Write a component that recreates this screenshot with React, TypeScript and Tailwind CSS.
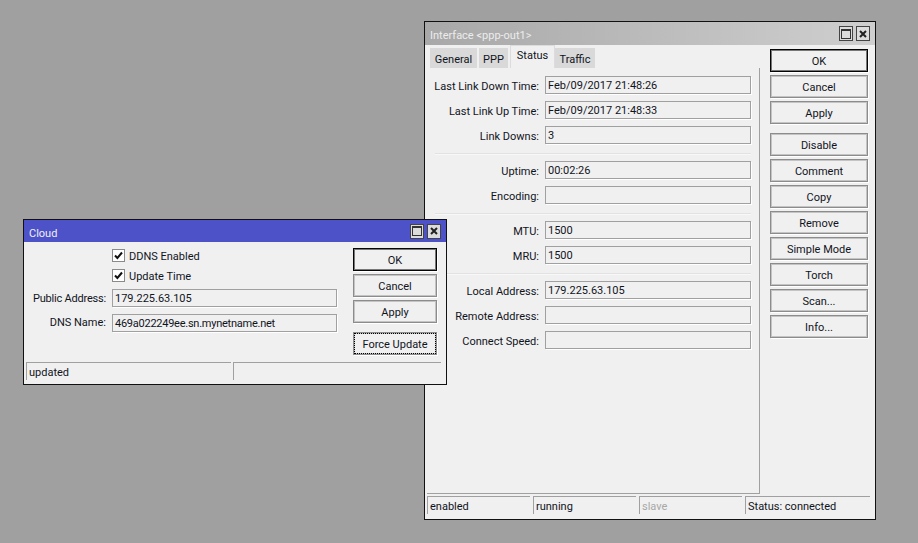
import React from "react";

const font = "font-['Roboto',sans-serif] text-[11px] leading-[14px] text-[#10141c]";

const Btn = ({ label, variant, className = "" }: { label: string; variant?: "default" | "focus"; className?: string }) => (
  <div
    className={`relative h-[23px] w-full flex items-center justify-center pt-[2px] border ${
      variant === "default" ? "border-[#050505] shadow-[inset_0_0_0_1px_#777,1px_1px_0_#fff]" : "border-[#8c8c8c] shadow-[inset_0_0_0_1px_#c4c4c4,1px_1px_0_#fff]"
    } ${className}`}
  >
    {variant === "focus" && <div className="absolute inset-0 border border-dotted border-black" />}
    {label}
  </div>
);

const Field = ({ value, className = "" }: { value?: string; className?: string }) => (
  <div className={`h-[18px] flex items-center pl-[2px] pt-[2px] border border-[#a0a0a0] shadow-[1px_1px_0_#fff] ${className}`}>{value}</div>
);

const Row = ({ label, value }: { label: string; value?: string }) => (
  <div className="flex items-center gap-[6px]">
    <div className="w-[112px] pt-[3px] text-right whitespace-nowrap">{label}:</div>
    <Field value={value} className="w-[206px]" />
  </div>
);

const Sep = () => <div className="ml-[8px] w-[316px] h-[2px] bg-[#e2e2e2] border-b border-[#f8f8f8]" />;

const Check = ({ label }: { label: string }) => (
  <div className="flex items-center gap-[4px] h-[13px] ml-[88px]">
    <div className="w-[13px] h-[13px] bg-white border border-[#8a8a8a] flex items-center justify-center">
      <svg width="9" height="9" viewBox="0 0 9 9">
        <path d="M1 4.5 L3.4 7 L8 1.5" fill="none" stroke="#111" strokeWidth="2" />
      </svg>
    </div>
    <span className="pt-[3px]">{label}</span>
  </div>
);

const TitleButtons = () => (
  <div className="flex gap-[3px]">
    <div className="w-[14px] h-[15px] bg-[#dcdcdc] border border-[#444] flex items-center justify-center">
      <div className="w-[10px] h-[10px] border border-[#333] border-t-2" />
    </div>
    <div className="w-[14px] h-[15px] bg-[#dcdcdc] border border-[#444] flex items-center justify-center">
      <svg width="8" height="8" viewBox="0 0 8 8">
        <path d="M1 1 L7 7 M7 1 L1 7" stroke="#222" strokeWidth="2" />
      </svg>
    </div>
  </div>
);

const Cell = ({ text, className = "" }: { text: string; className?: string }) => (
  <div className={`h-[18px] flex items-center pl-[2px] pt-[2px] border-l border-t border-[#a0a0a0] ${className}`}>{text}</div>
);

const Tab = ({ label, active, className = "" }: { label: string; active?: boolean; className?: string }) => (
  <div
    className={`flex justify-center ${
      active ? "h-[23px] pt-[3px] bg-[#f0f0f0] border-t border-x border-[#dcdcdc]" : "h-[20px] pt-[5px] bg-[#d9d9d9]"
    } ${className}`}
  >
    {label}
  </div>
);

export default function App() {
  return (
    <div className={`relative w-[918px] h-[543px] overflow-hidden bg-[#a0a0a0] ${font}`}>
      {/* interface window */}
      <div className="absolute left-[424px] top-[21px] w-[452px] h-[499px] border border-[#111] bg-[#f0f0f0] flex flex-col">
        <div className="h-[23px] shrink-0 flex items-center justify-between pl-[5px] pr-[5px] bg-gradient-to-r from-[#a8a8a8] to-[#cfcfcf] text-[#ececec]">
          <span className="pt-[5px]">{"Interface <ppp-out1>"}</span>
          <TitleButtons />
        </div>
        <div className="flex flex-1">
          <div className="w-[333px] ml-[2px]">
            <div className="flex items-end h-[23px] pl-[3px]">
              <Tab label="General" className="w-[47px]" />
              <Tab label="PPP" className="w-[29px] ml-[2px]" />
              <Tab label="Status" active className="w-[45px] ml-[2px]" />
              <Tab label="Traffic" className="w-[40px]" />
            </div>
            <div className="h-[426px] border-r border-b border-[#a0a0a0] pt-[8px] flex flex-col">
              <div className="flex flex-col gap-[7px]">
                <Row label="Last Link Down Time" value="Feb/09/2017 21:48:26" />
                <Row label="Last Link Up Time" value="Feb/09/2017 21:48:33" />
                <Row label="Link Downs" value="3" />
              </div>
              <div className="mt-[9px] mb-[6px]"><Sep /></div>
              <div className="flex flex-col gap-[7px]">
                <Row label="Uptime" value="00:02:26" />
                <Row label="Encoding" />
              </div>
              <div className="mt-[9px] mb-[6px]"><Sep /></div>
              <div className="flex flex-col gap-[7px]">
                <Row label="MTU" value="1500" />
                <Row label="MRU" value="1500" />
              </div>
              <div className="mt-[9px] mb-[6px]"><Sep /></div>
              <div className="flex flex-col gap-[7px]">
                <Row label="Local Address" value="179.225.63.105" />
                <Row label="Remote Address" />
                <Row label="Connect Speed" />
              </div>
            </div>
          </div>
          <div className="ml-[10px] w-[98px] pt-[4px] flex flex-col gap-[3px]">
            <Btn label="OK" variant="default" />
            <Btn label="Cancel" />
            <Btn label="Apply" />
            <Btn label="Disable" className="mt-[6px]" />
            {["Comment", "Copy", "Remove", "Simple Mode", "Torch", "Scan...", "Info..."].map((b) => (
              <Btn key={b} label={b} />
            ))}
          </div>
        </div>
        <div className="flex gap-[3px] ml-[2px] mb-[5px]">
          <Cell text="enabled" className="w-[103px]" />
          <Cell text="running" className="w-[103px]" />
          <Cell text="slave" className="w-[103px] text-[#a8a8a8]" />
          <Cell text="Status: connected" className="w-[125px]" />
        </div>
      </div>

      {/* cloud window */}
      <div className="absolute left-[23px] top-[219px] w-[424px] h-[166px] border border-[#111] bg-[#f0f0f0] flex flex-col">
        <div className="h-[22px] shrink-0 flex items-center justify-between px-[5px] bg-[#4d52c9] text-[#f0f0f0]">
          <span className="pt-[5px]">Cloud</span>
          <TitleButtons />
        </div>
        <div className="flex flex-1">
          <div className="w-[329px] pt-[7px] flex flex-col gap-[7px]">
            <Check label="DDNS Enabled" />
            <Check label="Update Time" />
            <div className="flex items-center gap-[6px]">
              <div className="w-[82px] pt-[2px] text-right whitespace-nowrap tracking-[-0.2px]">Public Address:</div>
              <Field value="179.225.63.105" className="w-[225px]" />
            </div>
            <div className="flex items-center gap-[6px]">
              <div className="w-[82px] text-right whitespace-nowrap">DNS Name:</div>
              <Field value="469a022249ee.sn.mynetname.net" className="w-[225px] tracking-[-0.25px]" />
            </div>
          </div>
          <div className="w-[84px] pt-[6px] flex flex-col gap-[3px]">
            <Btn label="OK" variant="default" />
            <Btn label="Cancel" />
            <Btn label="Apply" />
            <Btn label="Force Update" variant="focus" className="mt-[6px]" />
          </div>
        </div>
        <div className="flex gap-[2px] ml-[2px] mb-[4px]">
          <Cell text="updated" className="w-[205px]" />
          <Cell text="" className="w-[208px]" />
        </div>
      </div>
    </div>
  );
}
